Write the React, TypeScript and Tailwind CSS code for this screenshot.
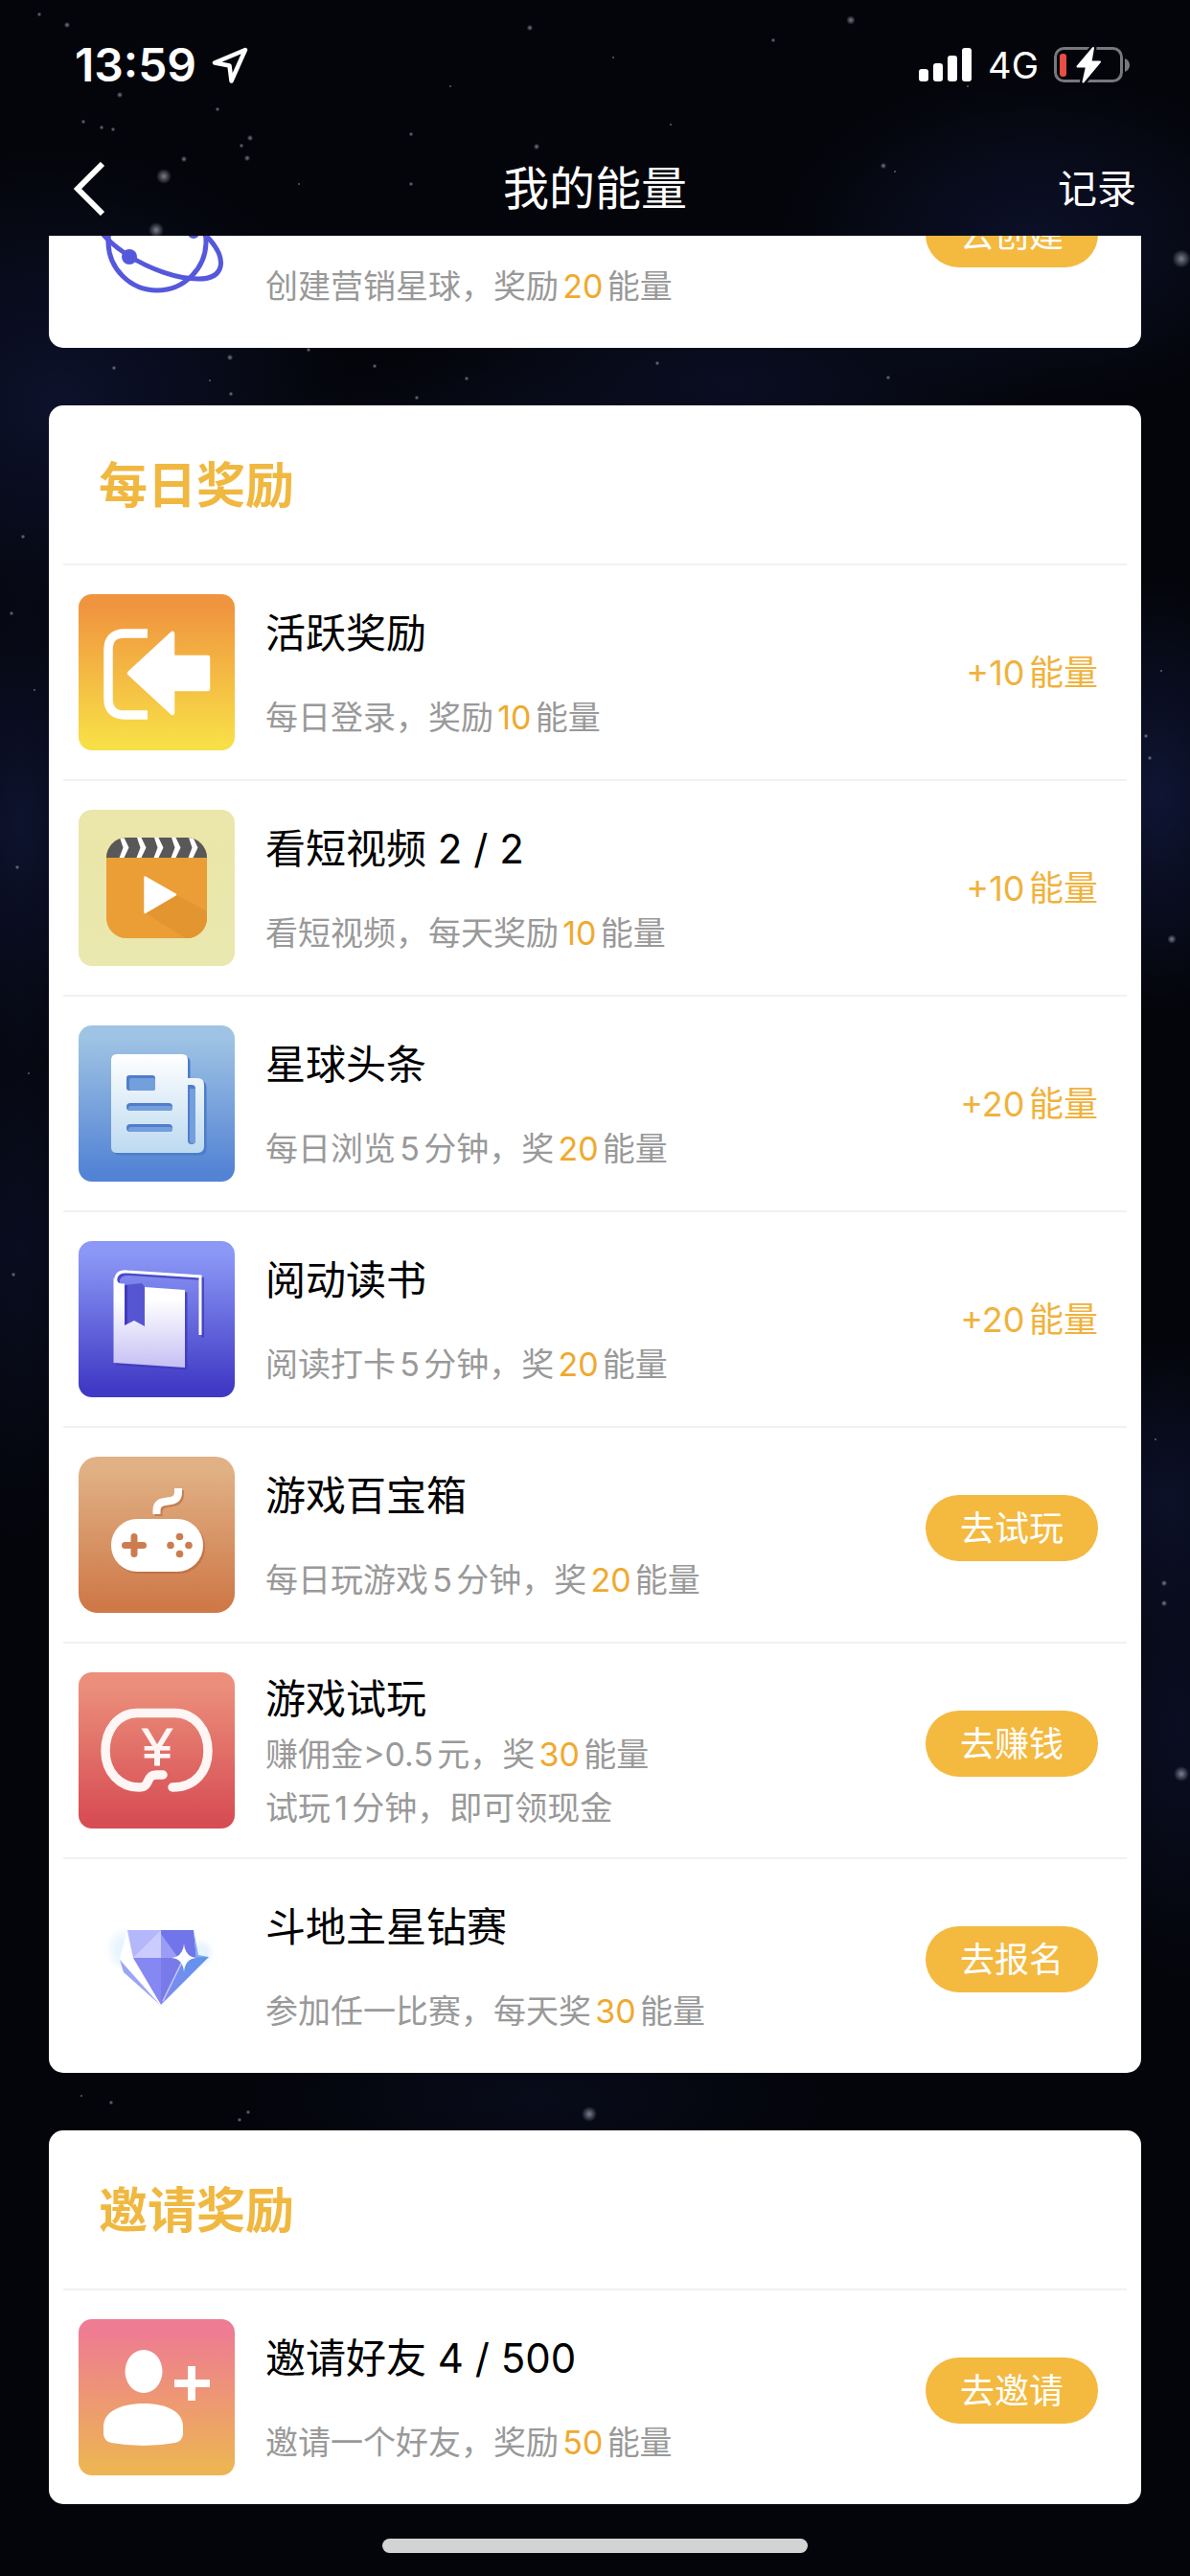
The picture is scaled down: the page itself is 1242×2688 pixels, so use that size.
import type { ReactNode } from "react";

type Task = {
  id: string;
  icon: ReactNode;
  title?: string;
  lines: ReactNode[];
  reward?: string;
  action?: string;
};

function Num({ children }: { children: ReactNode }) {
  return <span className="text-[#f0a92e]">{children}</span>;
}

const tileClass = "block size-[163px] shrink-0";

function Tile({
  id,
  from,
  to,
  radius = 14,
  children,
}: {
  id: string;
  from: string;
  to: string;
  radius?: number;
  children: ReactNode;
}) {
  return (
    <svg viewBox="0 0 163 163" className={tileClass} aria-hidden="true">
      <defs>
        <linearGradient id={`${id}-bg`} x1="0" y1="0" x2="0" y2="1">
          <stop offset="0.08" stopColor={from} />
          <stop offset="0.95" stopColor={to} />
        </linearGradient>
      </defs>
      <rect width="163" height="163" rx={radius} fill={`url(#${id}-bg)`} />
      {children}
    </svg>
  );
}

function PlanetIcon() {
  return (
    <svg viewBox="0 0 163 163" className={tileClass} fill="none" stroke="#5558dc" strokeWidth="5" aria-hidden="true">
      <circle cx="82" cy="82" r="51" />
      <path d="M107 62C70 26 20 22 14 48C12 80 80 121 125 121C153 121 155 100 136 79C128 70 118 64 112 60" />
      <circle cx="53" cy="98" r="8" fill="#5558dc" stroke="none" />
      <circle cx="120" cy="73" r="6" fill="#5558dc" stroke="none" />
    </svg>
  );
}

function LoginIcon() {
  return (
    <Tile id="login" from="#f0953f" to="#f8de47">
      <path d="M72 41H48Q31 41 31 58V109Q31 126 48 126H72" fill="none" stroke="#fff" strokeWidth="9.5" />
      <path
        d="M53 82.5L98 41V66H135V99H98V124Z"
        fill="#fff"
        stroke="#fff"
        strokeWidth="4.5"
        strokeLinejoin="round"
      />
    </Tile>
  );
}

function VideoIcon() {
  return (
    <Tile id="video" from="#ebe6a9" to="#e9e8ae">
      <defs>
        <clipPath id="video-clip">
          <rect x="29" y="29" width="105" height="105" rx="21" />
        </clipPath>
      </defs>
      <g clipPath="url(#video-clip)">
        <rect x="29" y="29" width="105" height="105" fill="#eb9d36" />
        <path d="M102 89L134 106V134H112L70 108Z" fill="#e3952f" />
        <rect x="29" y="29" width="105" height="21" fill="#585858" />
        {[0, 18, 36, 54, 72].map((x) => (
          <path key={x} d={`M${43 + x} 29h4.5l5 10.5l-5 10.500h-5l4 -10.5z`} fill="#fff" />
        ))}
      </g>
      <path d="M69.5 70.5L101 88.5L69.5 107Z" fill="#fff" stroke="#fff" strokeWidth="2.5" strokeLinejoin="round" />
    </Tile>
  );
}

function NewsIcon() {
  const sheet =
    "M40 30H108Q114 30 114 36V55H124Q131 55 131 62V126Q131 133 124 133H40Q34 133 34 127V36Q34 30 40 30Z";
  return (
    <Tile id="news" from="#9fc3e4" to="#5283d4">
      <defs>
        <linearGradient id="news-sheet" x1="0" y1="0" x2="0" y2="1">
          <stop offset="0" stopColor="#fff" />
          <stop offset="1" stopColor="#bddaf0" />
        </linearGradient>
      </defs>
      <path d={sheet} fill="#4c7dcb" transform="translate(2.5 2.5)" />
      <path d={sheet} fill="url(#news-sheet)" />
      <g fill="#4f7dca">
        <rect x="50" y="52" width="30" height="16" rx="3" />
        <rect x="50" y="81" width="48" height="8" rx="4" />
        <rect x="50" y="103" width="48" height="8" rx="4" />
        <path d="M114 62H118Q122 62 122 66V120A4 4 0 0 1 114 120Z" />
      </g>
      <g fill="#739fdc">
        <rect x="53" y="55" width="27" height="13" rx="2" />
        <rect x="52" y="84" width="46" height="5" rx="2.5" />
        <rect x="52" y="106" width="46" height="5" rx="2.5" />
        <path d="M116 66H122V120A3 3 0 0 1 116 120Z" />
      </g>
    </Tile>
  );
}

function BookIcon() {
  const page = "M36.5 38Q38 45 48 46V88L58 83L69 89V48L111 51V132L36.5 127Z";
  const cover = "M48 46Q37 46 39 38Q41 31 51 32L127 37V98";
  return (
    <Tile id="book" from="#8b98f6" to="#4039c5">
      <defs>
        <linearGradient id="book-page" x1="0" y1="0" x2="0" y2="1">
          <stop offset="0.25" stopColor="#fff" />
          <stop offset="1" stopColor="#c5bff4" />
        </linearGradient>
      </defs>
      <g transform="translate(2.5 2.5)" opacity="0.8">
        <path d={page} fill="#3f3bbd" />
        <path d={cover} fill="none" stroke="#3f3bbd" strokeWidth="3" />
      </g>
      <path d="M48 46V88L58 83L69 89V48L66 44Z" fill="#5656d2" />
      <path d="M48 46h3v41l-3 1z" fill="#3f3bbd" />
      <path d={page} fill="url(#book-page)" />
      <path d={cover} fill="none" stroke="#fff" strokeWidth="3" />
    </Tile>
  );
}

function GamepadIcon() {
  const cord = "M81.5 60V56Q81.5 48 90 47L96 46Q104 45 104 37V33";
  return (
    <Tile id="gamepad" from="#e0b184" to="#cf7949" radius={20}>
      <g transform="translate(2 2)" opacity="0.55">
        <path d={cord} fill="none" stroke="#b5633a" strokeWidth="8" />
        <rect x="34" y="65" width="96" height="55" rx="27" fill="#b5633a" />
      </g>
      <path d={cord} fill="none" stroke="#fff" strokeWidth="8" />
      <rect x="34" y="65" width="96" height="55" rx="27" fill="#fff" />
      <path d="M58 83.5V101.5M48.5 92.5H67.5" stroke="#cb7d50" strokeWidth="7" strokeLinecap="round" />
      <g fill="#cb7d50">
        <circle cx="105.5" cy="83.5" r="3.8" />
        <circle cx="105.5" cy="101.5" r="3.8" />
        <circle cx="96" cy="92.5" r="3.8" />
        <circle cx="115" cy="92.5" r="3.8" />
      </g>
    </Tile>
  );
}

function CashIcon() {
  return (
    <Tile id="cash" from="#eb8f7b" to="#d74d54">
      <path
        d="M98 120C122 120 135 103 135 82C135 60 121 42.5 100 42.5H62C41 42.5 28 60 28 82C28 104 43 120 63 120C76 120 69 107 82 107H88"
        fill="none"
        stroke="#fdf6f4"
        strokeWidth="9.5"
        strokeLinecap="round"
      />
      <text
        x="82"
        y="97"
        textAnchor="middle"
        fontSize="56"
        fill="#fdf6f4"
        stroke="#fdf6f4"
        fontFamily="Liberation Sans, sans-serif"
      >
        ¥
      </text>
    </Tile>
  );
}

function DiamondIcon() {
  return (
    <svg viewBox="0 0 163 163" className={tileClass} aria-hidden="true">
      <defs>
        <linearGradient id="diamond-right" x1="1" y1="0" x2="0" y2="1">
          <stop offset="0" stopColor="#5d95ee" />
          <stop offset="1" stopColor="#8587ee" />
        </linearGradient>
        <radialGradient id="diamond-glow">
          <stop offset="0.4" stopColor="#d8ecfd" />
          <stop offset="1" stopColor="#d8ecfd" stopOpacity="0" />
        </radialGradient>
      </defs>
      <ellipse cx="48" cy="64" rx="20" ry="24" fill="url(#diamond-glow)" opacity="0.6" />
      <ellipse cx="128" cy="68" rx="14" ry="16" fill="url(#diamond-glow)" opacity="0.6" />
      <path d="M43 74L50 46L57 73L85 122Z" fill="#fff" />
      <path d="M51 44H86V73H57Z" fill="#b4b7fa" />
      <path d="M86 44L57 73H86Z" fill="#c9ccfd" />
      <path d="M86 44H120L123 73H86Z" fill="#7275ea" />
      <path d="M86 48L104 73H86Z" fill="#9a9cf6" />
      <path d="M120 44L125 70L136 72L123 75Z" fill="#7db0f0" />
      <path d="M57 73H86V122Z" fill="#8587f2" />
      <path d="M86 73H110L86 122Z" fill="#787aea" />
      <path d="M110 73L136 72L86 122Z" fill="url(#diamond-right)" />
      <path d="M43 75L47 88L85 122Z" fill="#9aa6f4" />
      <path d="M110 73L88 118" stroke="#c5cbfb" strokeWidth="1.5" />
      <path d="M110 58Q111 72 123 73Q111 74 110 88Q109 74 97 73Q109 72 110 58Z" fill="#fff" />
    </svg>
  );
}

function InviteIcon() {
  return (
    <Tile id="invite" from="#ee7c92" to="#edb454">
      <g fill="#fff">
        <ellipse cx="68" cy="54.5" rx="19.5" ry="22.5" />
        <path d="M68 88C93 88 109 97 109 112V119Q109 127 101 129Q68 135 34 129Q26 127 26 119V112C26 97 43 88 68 88Z" />
        <path d="M114 49H122V63H137V71H122V85H114V71H100V63H114Z" />
      </g>
    </Tile>
  );
}

const planetTasks: Task[] = [
  {
    id: "create",
    icon: <PlanetIcon />,
    lines: [<>创建营销星球，奖励<Num>20</Num>能量</>],
    action: "去创建",
  },
];

const dailyTasks: Task[] = [
  {
    id: "login",
    icon: <LoginIcon />,
    title: "活跃奖励",
    lines: [<>每日登录，奖励<Num>10</Num>能量</>],
    reward: "+10能量",
  },
  {
    id: "video",
    icon: <VideoIcon />,
    title: "看短视频 2 / 2",
    lines: [<>看短视频，每天奖励<Num>10</Num>能量</>],
    reward: "+10能量",
  },
  {
    id: "news",
    icon: <NewsIcon />,
    title: "星球头条",
    lines: [<>每日浏览5分钟，奖<Num>20</Num>能量</>],
    reward: "+20能量",
  },
  {
    id: "book",
    icon: <BookIcon />,
    title: "阅动读书",
    lines: [<>阅读打卡5分钟，奖<Num>20</Num>能量</>],
    reward: "+20能量",
  },
  {
    id: "games",
    icon: <GamepadIcon />,
    title: "游戏百宝箱",
    lines: [<>每日玩游戏5分钟，奖<Num>20</Num>能量</>],
    action: "去试玩",
  },
  {
    id: "trial",
    icon: <CashIcon />,
    title: "游戏试玩",
    lines: [<>赚佣金&gt;0.5元，奖<Num>30</Num>能量</>, <>试玩1分钟，即可领现金</>],
    action: "去赚钱",
  },
  {
    id: "match",
    icon: <DiamondIcon />,
    title: "斗地主星钻赛",
    lines: [<>参加任一比赛，每天奖<Num>30</Num>能量</>],
    action: "去报名",
  },
];

const inviteTasks: Task[] = [
  {
    id: "invite",
    icon: <InviteIcon />,
    title: "邀请好友 4 / 500",
    lines: [<>邀请一个好友，奖励<Num>50</Num>能量</>],
    action: "去邀请",
  },
];

function TaskRow({ task }: { task: Task }) {
  return (
    <li className="mx-[15px] flex h-[225px] items-center border-t-2 border-[#f1f1f3] pr-[30px] pl-4">
      {task.icon}
      <div className="mt-1 ml-8 flex min-h-[146px] min-w-0 flex-1 flex-col">
        {task.title && <h3 className="text-[42px] leading-[60px] text-black">{task.title}</h3>}
        <div className="mt-auto">
          {task.lines.map((line, i) => (
            <p key={i} className="text-[34px] leading-[56px] text-[#999]">
              {line}
            </p>
          ))}
        </div>
      </div>
      {task.reward && <span className="text-[36px] leading-[56px] text-[#f0b23c]">{task.reward}</span>}
      {task.action && (
        <button
          type="button"
          className="mb-3.5 h-[69px] w-[180px] shrink-0 rounded-full bg-[#f4b93f] text-[36px] leading-[56px] text-white"
        >
          {task.action}
        </button>
      )}
    </li>
  );
}

function Card({ title, tasks }: { title?: string; tasks: Task[] }) {
  return (
    <section className="rounded-[15px] bg-white">
      {title && (
        <h2 className="flex h-[165px] items-center px-[52px] pt-1 text-[51px] font-bold text-[#f0b840]">{title}</h2>
      )}
      <ul>
        {tasks.map((task) => (
          <TaskRow key={task.id} task={task} />
        ))}
      </ul>
    </section>
  );
}

const clouds = [
  [60, 420, 300, 260, 0.55],
  [1080, 250, 260, 170, 0.5],
  [480, 560, 330, 180, 0.45],
  [1210, 830, 120, 220, 0.7],
  [20, 860, 110, 260, 0.6],
  [1220, 1560, 120, 160, 0.5],
  [1230, 1800, 110, 260, 0.4],
  [760, 400, 340, 120, 0.4],
  [20, 1300, 90, 300, 0.35],
  [560, 2190, 300, 90, 0.25],
];

const stars = [
  [70, 26, 2], [41, 15, 1.5], [888, 21, 3], [553, 29, 2], [807, 42, 1.5], [125, 99, 2], [227, 114, 1.5],
  [87, 127, 1.5], [106, 133, 1.5], [118, 135, 1.5], [261, 144, 2], [258, 165, 2], [252, 152, 1.5],
  [171, 184, 5], [192, 166, 2], [163, 240, 5], [560, 153, 2], [429, 140, 1.5], [429, 192, 1.5],
  [922, 173, 2], [312, 192, 1], [934, 179, 1], [1233, 270, 6], [240, 373, 2], [119, 384, 1.5],
  [322, 365, 1.5], [391, 382, 1.5], [487, 395, 1.5], [435, 415, 1.5], [686, 379, 1.5], [927, 394, 1.5],
  [241, 411, 1.5], [219, 397, 1], [1196, 768, 1.5], [1200, 791, 1.5], [1223, 980, 3], [1215, 1652, 2],
  [1215, 1673, 2], [1233, 1851, 5], [24, 560, 1.5], [12, 640, 1.5], [36, 720, 1], [18, 905, 1.5],
  [30, 1120, 1], [14, 1330, 1.5], [615, 2206, 5], [116, 2194, 1.5], [259, 2204, 1.5], [250, 2212, 1.5],
  [85, 2187, 1], [1206, 1502, 1], [1212, 700, 1], [640, 60, 1], [700, 130, 1], [470, 90, 1], [1010, 90, 1],
];

function StarField() {
  return (
    <svg
      viewBox="0 0 1242 2688"
      preserveAspectRatio="xMidYMin slice"
      className="absolute inset-0 h-full w-full"
      aria-hidden="true"
    >
      <defs>
        <radialGradient id="cloud">
          <stop offset="0" stopColor="#141c46" />
          <stop offset="1" stopColor="#141c46" stopOpacity="0" />
        </radialGradient>
        <radialGradient id="star">
          <stop offset="0" stopColor="#c9cede" />
          <stop offset="1" stopColor="#c9cede" stopOpacity="0" />
        </radialGradient>
      </defs>
      {clouds.map(([cx, cy, rx, ry, opacity], i) => (
        <ellipse key={i} cx={cx} cy={cy} rx={rx} ry={ry} fill="url(#cloud)" opacity={opacity} />
      ))}
      {stars.map(([cx, cy, r], i) => (
        <circle key={i} cx={cx} cy={cy} r={r * 1.6} fill="url(#star)" opacity="0.6" />
      ))}
    </svg>
  );
}

function StatusBar() {
  return (
    <div className="flex h-[136px] items-center justify-between pr-[62px] pl-[78px] text-white">
      <div className="flex items-center gap-4">
        <span className="text-[48px] leading-[60px] font-semibold">13:59</span>
        <svg viewBox="0 0 38 38" className="size-[38px]" aria-hidden="true">
          <path
            d="M35 3L3 16.5L18.5 19.5L20.5 35.5Z"
            fill="none"
            stroke="#fff"
            strokeWidth="4.5"
            strokeLinejoin="round"
          />
        </svg>
      </div>
      <div className="flex items-center">
        <svg viewBox="0 0 56 36" className="h-9 w-14" fill="#fff" aria-hidden="true">
          <rect x="0" y="22" width="10" height="13" rx="3" />
          <rect x="15" y="16" width="10" height="19" rx="3" />
          <rect x="30" y="8" width="10" height="27" rx="3" />
          <rect x="45" y="0" width="10" height="35" rx="3" />
        </svg>
        <span className="ml-4 text-[38px] leading-[60px]">4G</span>
        <svg viewBox="0 0 80 40" className="ml-4 h-10 w-20" aria-hidden="true">
          <rect x="1.5" y="2.5" width="69" height="34" rx="9" fill="none" stroke="#77787d" strokeWidth="3" />
          <path d="M74 13Q79 15 79 20Q79 25 74 27Z" fill="#77787d" />
          <rect x="6" y="8" width="7" height="24" rx="3" fill="#eb4d45" />
          <path
            d="M41 2L24.5 21.5H34L30.5 37.5L48 16.5H38.5Z"
            fill="#05060f"
            stroke="#05060f"
            strokeWidth="7"
            strokeLinejoin="round"
          />
          <path
            d="M41 2L24.5 21.5H34L30.5 37.5L48 16.5H38.5Z"
            fill="#fff"
            stroke="#fff"
            strokeWidth="2"
            strokeLinejoin="round"
          />
        </svg>
      </div>
    </div>
  );
}

function NavBar() {
  return (
    <nav className="mt-3 grid h-[98px] grid-cols-3 items-center px-14 text-white">
      <button type="button" aria-label="返回" className="justify-self-start pl-5">
        <svg viewBox="0 0 34 56" className="h-14 w-[34px]" aria-hidden="true">
          <path d="M31 2L5 28L31 54" fill="none" stroke="#fff" strokeWidth="6" />
        </svg>
      </button>
      <h1 className="justify-self-center text-[48px] leading-[60px]">我的能量</h1>
      <a href="#records" className="justify-self-end text-[41px] leading-[60px]">
        记录
      </a>
    </nav>
  );
}

export default function App() {
  return (
    <div className="relative flex min-h-screen flex-col bg-[#04050b] font-['Inter','Noto_Sans_CJK_SC',sans-serif] [text-autospace:normal]">
      <StarField />
      <header className="relative">
        <StatusBar />
        <NavBar />
      </header>
      <main className="relative overflow-hidden px-[51px]">
        {/* list is scrolled, the first card slides under the header */}
        <div className="-mt-[108px] flex flex-col gap-[60px]">
          <Card tasks={planetTasks} />
          <Card title="每日奖励" tasks={dailyTasks} />
          <Card title="邀请奖励" tasks={inviteTasks} />
        </div>
      </main>
      <div className="relative mt-auto flex justify-center pt-9 pb-6">
        <div className="h-[15px] w-[444px] rounded-full bg-[#d3d3d4]" />
      </div>
    </div>
  );
}
